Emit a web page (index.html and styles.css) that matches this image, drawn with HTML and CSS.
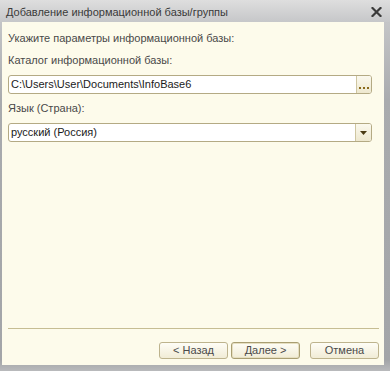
FILE: index.html
```html
<!DOCTYPE html>
<html lang="ru">
<head>
<meta charset="utf-8">
<title>Добавление информационной базы/группы</title>
<link rel="stylesheet" href="styles.css">
</head>
<body>
<div class="window">
  <div class="titlebar">
    <span class="title">Добавление информационной базы/группы</span>
    <svg class="close" width="11" height="10" viewBox="0 0 11 10"><path d="M1.5 1 L9.5 9 M9.5 1 L1.5 9" stroke="#3a3a3a" stroke-width="2.2" stroke-linecap="square"/></svg>
  </div>
  <div class="content">
    <div class="form">
      <div class="label heading">Укажите параметры информационной базы:</div>
      <div class="label">Каталог информационной базы:</div>
      <div class="field">
        <div class="field-text">C:\Users\User\Documents\InfoBase6</div>
        <div class="field-btn dots-btn"><svg width="10" height="2" viewBox="0 0 10 2"><rect x="0" y="0" width="2" height="2" fill="#8a6a1c"/><rect x="4" y="0" width="2" height="2" fill="#8a6a1c"/><rect x="8" y="0" width="2" height="2" fill="#8a6a1c"/></svg></div>
      </div>
      <div class="label">Язык (Страна):</div>
      <div class="field">
        <div class="field-text">русский (Россия)</div>
        <div class="field-btn"><svg width="7" height="4" viewBox="0 0 7 4"><path d="M0 0 H7 L3.5 4 Z" fill="#4a3a12"/></svg></div>
      </div>
    </div>
    <div class="footer">
      <div class="separator"></div>
      <div class="buttons">
        <div class="btn">&lt; Назад</div>
        <div class="btn default">Далее &gt;</div>
        <div class="btn cancel">Отмена</div>
      </div>
    </div>
  </div>
</div>
</body>
</html>
```
FILE: styles.css
```css
html, body {
  margin: 0;
  padding: 0;
}
body {
  width: 390px;
  height: 371px;
  overflow: hidden;
  font-family: "Liberation Sans", Arial, sans-serif;
  font-size: 11px;
}
.window {
  width: 390px;
  height: 371px;
  display: flex;
  flex-direction: column;
  background: linear-gradient(to bottom, #d9d9da 0px, #c4c5c7 22px, #a9abae 100px, #a3a5a8 360px, #b9babc 371px);
}
.titlebar {
  height: 22px;
  flex: none;
  display: flex;
  align-items: center;
  justify-content: space-between;
  padding: 0 8px 0 6px;
  background: linear-gradient(to bottom, #dedede, #c6c7c9);
}
.title {
  color: #3a3a3a;
  font-size: 11px;
  padding-top: 1px;
}
.close {
  display: block;
  margin-top: 1px;
}
.content {
  flex: 1;
  margin: 0 6px 6px 2px;
  background: #fdfbeb;
  display: flex;
  flex-direction: column;
  justify-content: space-between;
}
.form {
  display: flex;
  flex-direction: column;
  padding: 8px 12px 0 6px;
}
.label {
  color: #494949;
  line-height: 16px;
  height: 16px;
  font-size: 11px;
}
.heading {
  margin-bottom: 6px;
}
.label + .field {
  margin-top: 7px;
}
.field + .label {
  margin-top: 6px;
}
.field {
  height: 19px;
  display: flex;
  border: 1px solid #b4aa84;
  border-radius: 3px;
  background: #fff;
  box-sizing: border-box;
}
.field-text {
  flex: 1;
  padding-left: 2px;
  line-height: 17px;
  color: #1a1a1a;
  font-size: 11px;
}
.field-btn {
  width: 15px;
  border-left: 1px solid #cfc6a1;
  border-radius: 0 2px 2px 0;
  background: linear-gradient(to bottom, #fbf9ee, #eee8cf);
  display: flex;
  align-items: center;
  justify-content: center;
}
.field-btn svg {
  display: block;
}
.dots-btn {
  align-items: flex-end;
  padding-bottom: 4px;
  box-sizing: border-box;
}
.footer {
  padding: 0 5px 6px 6px;
  display: flex;
  flex-direction: column;
}
.separator {
  height: 1px;
  background: #c6bd93;
  margin-bottom: 13px;
}
.buttons {
  display: flex;
  justify-content: flex-end;
  gap: 3px;
}
.btn {
  width: 69px;
  height: 17px;
  box-sizing: border-box;
  border: 1px solid #bdb38d;
  border-radius: 3px;
  background: linear-gradient(to bottom, #fefdf6, #f1ecd6);
  color: #4a4a4a;
  font-size: 11px;
  line-height: 15px;
  text-align: center;
}
.btn.default {
  border-color: #a99e72;
  box-shadow: inset 0 0 0 1px #e6dfc1;
}
.btn.cancel {
  margin-left: 7px;
}
```
